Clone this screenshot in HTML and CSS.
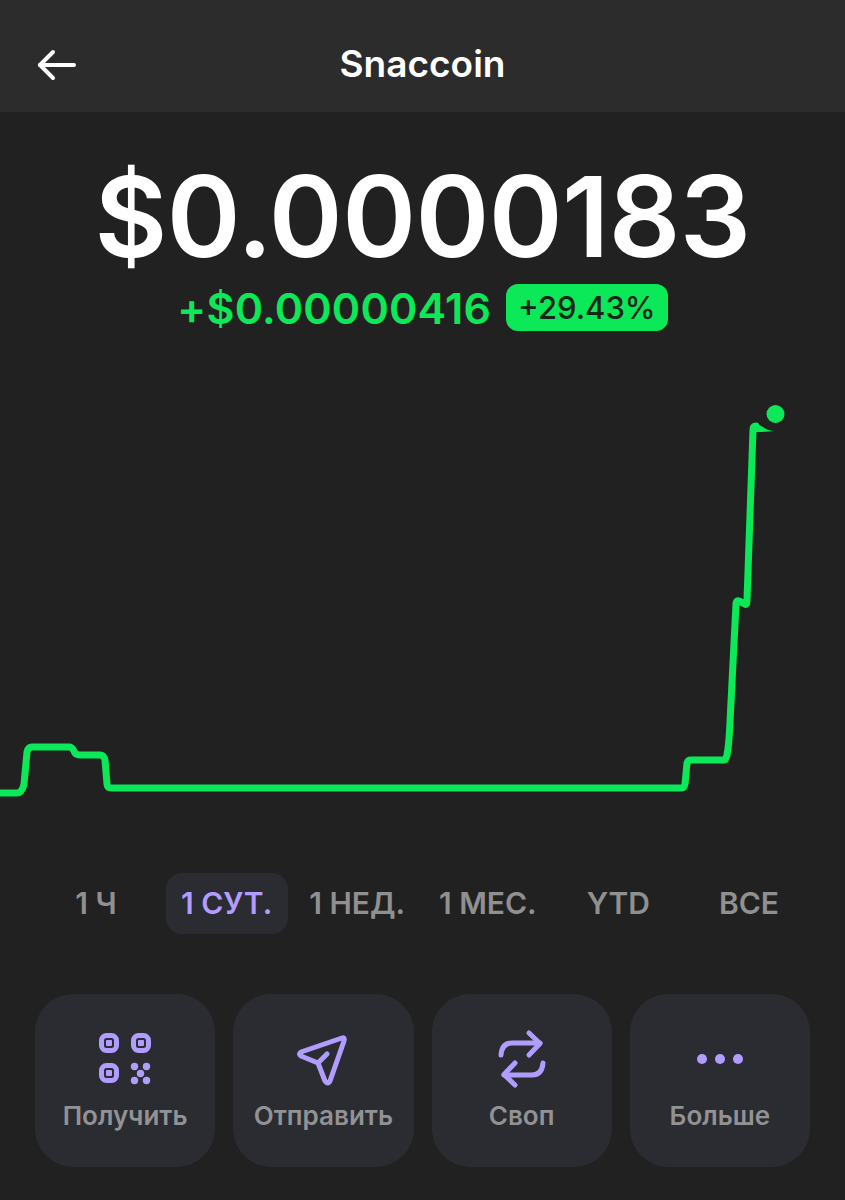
FILE: index.html
```html
<!DOCTYPE html>
<html>
<head>
<title>Snaccoin</title>
<meta name="viewport" content="width=device-width, initial-scale=1">
<link rel="stylesheet" href="styles.css">
</head>
<body>

<div class="topbar">
  <a class="back" href="#">
    <svg width="44" height="36" viewBox="0 0 44 36" fill="none" stroke="#fff" stroke-width="4" stroke-linecap="round" stroke-linejoin="round">
      <path d="M5 18 H39"/>
      <path d="M18 5 L5 18 L18 31"/>
    </svg>
  </a>
  <h1>Snaccoin</h1>
</div>

<div class="price">$0.0000183</div>
<div class="change">
  <span class="change-value">+$0.00000416</span>
  <span class="change-chip">+29.43%</span>
</div>

<!-- viewBox uses page coordinates so the points read straight off the screenshot -->
<svg class="chart" width="845" height="473" viewBox="0 400 845 473" fill="none">
  <path d="M0 793 H17 Q22 793 24 784 L27 752 Q28 747 32 747 H69 Q72 747 74 751 Q75 755 80 755 H100 Q104 755 105 760 L107 784 Q107 788 112 788 H682 Q684 788 685 784 L687 763 Q688 760 691 760 H724 Q726 760 727 755 Q729 745 730 722 L736 604 Q736 600 739 601 L745 604 Q747 606 747 600 L753 430 Q753 426 756 426" stroke="#0be959" stroke-width="7" stroke-linecap="round" stroke-linejoin="round"/>
  <path d="M755 423 L763 427 Q768 431 775 431 L762 432 L755 432 Z" fill="#0be959"/>
  <circle cx="775.5" cy="414" r="9" fill="#0be959"/>
</svg>

<div class="tabs">
  <div class="tab">1 Ч</div>
  <div class="tab active">1 СУТ.</div>
  <div class="tab">1 НЕД.</div>
  <div class="tab">1 МЕС.</div>
  <div class="tab">YTD</div>
  <div class="tab">ВСЕ</div>
</div>

<div class="actions">
  <a class="action" href="#">
    <svg width="60" height="60" viewBox="0 0 60 60" fill="none" stroke="#b19dff" stroke-width="5">
      <rect x="6.500" y="6.500" width="15" height="15" rx="5"/>
      <rect x="38.500" y="6.500" width="15" height="15" rx="5"/>
      <rect x="6.500" y="36.500" width="15" height="15" rx="5"/>
      <g fill="#b19dff" stroke="none">
        <rect x="11" y="11" width="6" height="6" rx="1"/>
        <rect x="43" y="11" width="6" height="6" rx="1"/>
        <rect x="11" y="41" width="6" height="6" rx="1"/>
        <circle cx="39.500" cy="37.500" r="3.700"/>
        <circle cx="51.500" cy="37.500" r="3.700"/>
        <circle cx="45.500" cy="44.500" r="3.700"/>
        <circle cx="39.500" cy="51.500" r="3.700"/>
        <circle cx="51.500" cy="51.500" r="3.700"/>
      </g>
    </svg>
    <span>Получить</span>
  </a>
  <a class="action" href="#">
    <svg width="60" height="60" viewBox="0 0 60 60" fill="none" stroke="#b19dff" stroke-width="5" stroke-linecap="round" stroke-linejoin="round">
      <path d="M49 9 Q52 8 51 12 L37 52 Q35 56 32 52 L25 34 L8 27 Q5 25 8 23 Z"/>
      <path d="M25 34 L34 25"/>
    </svg>
    <span>Отправить</span>
  </a>
  <a class="action" href="#">
    <svg width="60" height="60" viewBox="0 0 60 60" fill="none" stroke="#b19dff" stroke-width="5" stroke-linecap="round" stroke-linejoin="round">
      <path d="M9 26 Q10 14 20 14 H48"/>
      <path d="M37 4 L48 14.500 L37 26"/>
      <path d="M51 34 Q50 46 40 46 H12"/>
      <path d="M23 34 L12 45.500 L23 56"/>
    </svg>
    <span>Своп</span>
  </a>
  <a class="action" href="#">
    <svg width="60" height="60" viewBox="0 0 60 60" fill="#b19dff">
      <circle cx="12" cy="30" r="5"/>
      <circle cx="30" cy="30" r="5"/>
      <circle cx="48" cy="30" r="5"/>
    </svg>
    <span>Больше</span>
  </a>
</div>

</body>
</html>
```

FILE: styles.css
```css
body {
  margin: 0;
  background-color: #212121;
  font-family: Inter, "Liberation Sans", sans-serif;
  color: #fff;
}

a {
  text-decoration: none;
  color: inherit;
}

/* top bar */
.topbar {
  height: 112px;
  background-color: #2c2c2c;
  display: flex;
  align-items: center;
  justify-content: center;
  position: relative;
}

.topbar h1 {
  margin: 15px 0 0 0;
  font-size: 37px;
  font-weight: 600;
  line-height: 42px;
}

.back {
  position: absolute;
  left: 35px;
  top: 47px;
  display: block;
  line-height: 0;
}

/* price */
.price {
  margin-top: 43px;
  text-align: center;
  font-size: 112px;
  font-weight: 600;
  line-height: 122px;
  letter-spacing: -0.6px;
}

.change {
  margin-top: 7px;
  height: 47px;
  display: flex;
  align-items: center;
  justify-content: center;
  gap: 15px;
}

.change-value {
  font-size: 43px;
  font-weight: 600;
  letter-spacing: 0.2px;
  color: #0be959;
}

.change-chip {
  background-color: #0be959;
  color: #14261a;
  border-radius: 12px;
  height: 47px;
  padding: 0 12px;
  display: flex;
  align-items: center;
  font-size: 31px;
  font-weight: 500;
}

/* chart */
.chart {
  display: block;
  margin-top: 69px;
}

/* range tabs */
.tabs {
  display: grid;
  grid-template-columns: repeat(6, 122px);
  justify-content: space-between;
  padding: 0 35px;
}

.tab {
  height: 61px;
  border-radius: 16px;
  display: flex;
  align-items: center;
  justify-content: center;
  padding-bottom: 2px;
  box-sizing: border-box;
  font-size: 30px;
  font-weight: 600;
  color: #909090;
}

.tab.active {
  background-color: #2b2c31;
  color: #b19dff;
}

/* action buttons */
.actions {
  margin-top: 60px;
  padding: 0 35px;
  display: grid;
  grid-template-columns: repeat(4, 1fr);
  gap: 18px;
}

.action {
  height: 173px;
  background-color: #2b2c31;
  border-radius: 38px;
  display: flex;
  flex-direction: column;
  align-items: center;
  padding-top: 35px;
  box-sizing: border-box;
}

.action svg {
  display: block;
}

.action span {
  margin-top: 10px;
  font-size: 26px;
  font-weight: 600;
  line-height: 34px;
  color: #929294;
}
```
